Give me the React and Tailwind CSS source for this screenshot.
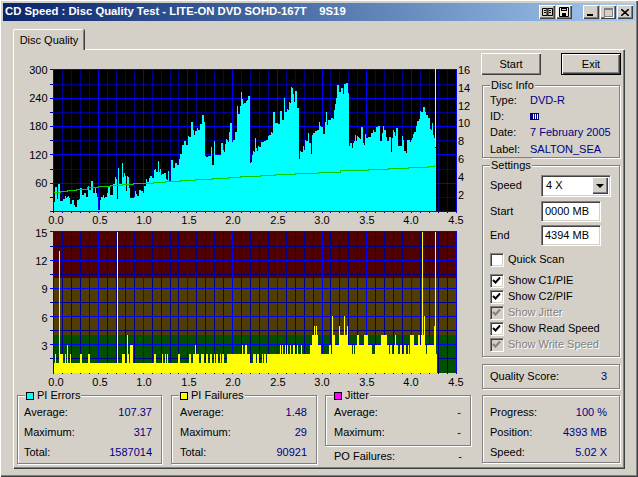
import React from "react";

const FACE = "bg-[#d4d0c8]";
const RAISED = "shadow-[inset_1px_1px_0_#fff,inset_-1px_-1px_0_#404040,inset_-2px_-2px_0_#808080]";
const SUNKEN = "shadow-[inset_1px_1px_0_#808080,inset_2px_2px_0_#404040,inset_-1px_-1px_0_#d4d0c8,1px_1px_0_#fff]";

const X0 = 53.3;
const XEND = 456;
const PER_UNIT = 89.4;
const DATA_END = 436;

// outline of the PI errors graph, read off the reference in page pixels
const piOutline = [
  [53, 199], [63, 196], [68, 193], [70, 200], [75, 202], [83, 194], [93, 189], [95, 184], [97, 198],
  [107, 193], [117, 189], [120, 183], [125, 172], [128, 178], [130, 194], [142, 189], [150, 176],
  [157, 167], [167, 175], [170, 166], [177, 162], [183, 143], [190, 134], [197, 127], [202, 116],
  [204, 117], [205, 153], [213, 157], [223, 141], [233, 138], [237, 113], [242, 100], [248, 96],
  [249, 163], [253, 150], [267, 137], [273, 130], [275, 121], [283, 114], [293, 95], [297, 104],
  [299, 152], [307, 141], [317, 128], [333, 118], [337, 90], [347, 82], [348, 100], [349, 147],
  [357, 136], [363, 143], [372, 128], [383, 124], [387, 141], [393, 131], [403, 153], [413, 134],
  [422, 105], [427, 114], [430, 124], [435, 143],
];

const speedLine = [
  [54, 192], [60, 191], [67, 190], [76, 189], [87, 187], [98, 186], [110, 185], [122, 184], [133, 183],
  [153, 182], [165, 181], [180, 180], [195, 179], [212, 178], [228, 177], [240, 176], [260, 175],
  [275, 174], [295, 173], [318, 172], [340, 170], [368, 169], [388, 168], [408, 167], [428, 166], [434, 165],
];

// [from, to, level] in page pixels for the PI failures bars
const piFailBars = [
  [55, 56, 2], [59, 63, 2], [65, 66, 2], [67, 68, 3], [70, 71, 2], [80, 82, 2], [88, 90, 2], [122, 125, 2],
  [127, 129, 2], [127, 128, 4], [130, 133, 3], [154, 156, 2], [162, 163, 2], [165, 166, 2], [167, 168, 2],
  [178, 180, 2], [189, 191, 2], [193, 199, 2], [195, 196, 3], [201, 204, 2], [206, 208, 2], [210, 212, 2],
  [214, 215, 2], [216, 218, 2], [220, 221, 2], [222, 224, 2], [227, 250, 2], [242, 243, 3], [245, 247, 3],
  [253, 256, 2], [257, 259, 2], [262, 263, 2], [264, 266, 2], [267, 437, 2],
  [242, 243, 3], [245, 246, 3], [280, 281, 3], [282, 283, 3], [285, 286, 3], [287, 288, 3], [290, 291, 3],
  [293, 295, 3], [297, 298, 3], [301, 302, 3], [310, 321, 3], [312, 318, 4], [314, 315, 5], [316, 317, 5],
  [329, 331, 3], [332, 333, 6], [333, 335, 4], [333, 339, 3], [339, 340, 5], [339, 348, 4], [344, 345, 6],
  [347, 348, 5], [348, 352, 3], [353, 354, 3], [355, 363, 3], [357, 359, 4], [363, 372, 3], [364, 368, 4],
  [375, 389, 3], [381, 387, 4], [390, 392, 3], [394, 398, 3], [395, 396, 4], [400, 402, 3], [404, 406, 3],
  [408, 409, 3], [410, 426, 3], [410, 414, 4], [418, 420, 4], [421, 425, 4], [424, 425, 6], [427, 434, 3],
  [434, 436, 5],
];

function rng(seed) {
  let s = seed;
  return () => {
    s = (s * 16807) % 2147483647;
    return s / 2147483647;
  };
}

function outlineAt(x) {
  for (let i = 1; i < piOutline.length; i++) {
    const [x1, y1] = piOutline[i];
    const [x0, y0] = piOutline[i - 1];
    if (x <= x1) return y0 + ((y1 - y0) * (x - x0)) / Math.max(x1 - x0, 1);
  }
  return 143;
}

function piBars() {
  const r = rng(4711);
  const bars = [];
  let x = 54;
  while (x < DATA_END) {
    const w = r() < 0.6 ? 1 : 2;
    const n = r();
    let y = outlineAt(x) + 2 + (r() - 0.5) * 7;
    if (n < 0.07) y += 5 + r() * 9;
    else if (n > 0.82) y -= 5 + r() * 13;
    bars.push([x, Math.max(y, 70), w]);
    x += w;
  }
  return bars;
}

function Grid({ top, bottom, hMajor, hMinor }) {
  const vs = [];
  for (let i = 0; i <= 45; i++) vs.push(i);
  return (
    <g shapeRendering="crispEdges">
      {hMinor.map((y) => (
        <line key={y} x1="50" x2={XEND} y1={y} y2={y} stroke="#000090" />
      ))}
      {vs.map((i) => {
        const x = Math.round(X0 + i * (PER_UNIT / 10)) + 0.5;
        return (
          <line
            key={i}
            x1={x}
            x2={x}
            y1={top}
            y2={bottom + 2}
            stroke={i % 5 === 0 ? "#0000ff" : "#000090"}
          />
        );
      })}
      {hMajor.map((y) => (
        <line key={y} x1="50" x2={XEND} y1={y} y2={y} stroke="#0000ff" />
      ))}
    </g>
  );
}

const xLabels = [
  ["0.0", 56], ["0.5", 100], ["1.0", 144], ["1.5", 189], ["2.0", 233],
  ["2.5", 278], ["3.0", 322], ["3.5", 367], ["4.0", 411], ["4.5", 456],
];

function XAxis({ y }) {
  return xLabels.map(([t, x]) => (
    <text key={t} x={x} y={y} textAnchor="middle" fontSize="11" fill="#000">
      {t}
    </text>
  ));
}

function ErrorsChart() {
  const lefts = [300, 240, 180, 120, 60];
  const rights = [16, 14, 12, 10, 8, 6, 4, 2];
  const major = [69.5, 98.5, 126.5, 154.5, 183.5, 211.5];
  const minor = [84.5, 112.5, 140.5, 169.5, 197.5];
  return (
    <svg viewBox="20 60 460 166" width="460" height="166" className="ml-[6px] block shrink-0">
      <rect x="53" y="69" width="403" height="142" fill="#000" />
      <Grid top={69} bottom={211} hMajor={major} hMinor={minor} />
      <g shapeRendering="crispEdges" fill="#00ffff">
        {piBars().map(([x, y, w]) => (
          <rect key={x} x={x} y={y} width={w} height={211 - y} />
        ))}
      </g>
      <line x1="435.5" x2="435.5" y1="69" y2="147" stroke="#e8e8e8" shapeRendering="crispEdges" />
      <polyline
        points={speedLine.map(([x, y], i) => (i ? `${x},${speedLine[i - 1][1]} ${x},${y}` : `${x},${y}`)).join(" ")}
        fill="none"
        stroke="#00d000"
        strokeWidth="1"
        shapeRendering="crispEdges"
      />
      {lefts.map((v, i) => (
        <text key={v} x="47.500" y={74 + i * 28.2} textAnchor="end" fontSize="11" fill="#000">
          {v}
        </text>
      ))}
      {rights.map((v, i) => (
        <text key={v} x="458" y={74 + i * 17.8} fontSize="11" fill="#000">
          {v}
        </text>
      ))}
      <XAxis y={224} />
    </svg>
  );
}

function FailuresChart() {
  const levels = {};
  for (let x = 54; x < DATA_END; x++) levels[x] = 1;
  piFailBars.forEach(([a, b, l]) => {
    for (let x = a; x < b; x++) levels[x] = Math.max(levels[x] || 0, l);
  });
  const base = 372.7;
  const unit = 9.4;
  const major = [231.5, 260.5, 288.5, 316.5, 344.5];
  const minor = [246.5, 274.5, 302.5, 330.5, 358.5];
  return (
    <svg viewBox="20 226 460 168" width="460" height="168" className="ml-[6px] block shrink-0">
      <g shapeRendering="crispEdges">
        <rect x="53" y="231" width="403" height="47" fill="#500000" />
        <rect x="53" y="278" width="403" height="57" fill="#503c05" />
        <rect x="53" y="335" width="403" height="38" fill="#005000" />
      </g>
      <Grid top={231} bottom={372} hMajor={major} hMinor={minor} />
      <g shapeRendering="crispEdges" fill="#ffff00">
        {Object.keys(levels).map((k) => (
          <rect key={k} x={k} y={base - levels[k] * unit} width="1" height={levels[k] * unit} />
        ))}
        <rect x="59" y={base - 13 * unit} width="1" height={13 * unit} />
        <rect x="422" y="232" width="1" height="140" />
        <rect x="117" y="232" width="1" height="132" fill="#f4f4e0" />
        <rect x="435" y="232" width="1" height="97" fill="#e8e8e8" />
      </g>
      {[15, 12, 9, 6, 3].map((v, i) => (
        <text key={v} x="47.500" y={237 + i * 28.2} textAnchor="end" fontSize="11" fill="#000">
          {v}
        </text>
      ))}
      <XAxis y={386} />
    </svg>
  );
}

function GroupBox({ title, swatch, className, children }) {
  return (
    <div
      className={`relative border border-[#808080] shadow-[inset_1px_1px_0_#fff,1px_1px_0_#fff] ${className}`}
    >
      {title && (
        <div className={`absolute top-[-8px] left-[7px] flex items-center gap-[3px] px-[1px] h-[15px] ${FACE}`}>
          {swatch && <span className={`w-[8px] h-[8px] border border-black ${swatch}`} />}
          <span>{title}</span>
        </div>
      )}
      {children}
    </div>
  );
}

function StatRow({ label, value, className = "h-[20px]" }) {
  return (
    <div className={`flex items-center justify-between ${className}`}>
      <span>{label}</span>
      <span className="text-[#000080]">{value}</span>
    </div>
  );
}

function InfoRow({ label, children }) {
  return (
    <div className="flex items-center h-[16.3px]">
      <span className="w-[40px] shrink-0">{label}</span>
      <span className="text-[#000080] whitespace-nowrap">{children}</span>
    </div>
  );
}

function Check({ label, checked, disabled }) {
  return (
    <div className="flex items-center h-[16px]">
      <span
        className={`w-[13px] h-[13px] mr-[5px] flex items-center justify-center ${SUNKEN} ${
          disabled ? "bg-[#d4d0c8]" : "bg-white"
        }`}
      >
        {checked && (
          <svg viewBox="0 0 9 9" width="9" height="9">
            <path d="M1 4 L3.5 6.5 L8 1.5" fill="none" stroke={disabled ? "#808080" : "#000"} strokeWidth="1.9" />
          </svg>
        )}
      </span>
      <span className={disabled ? "text-[#808080] [text-shadow:1px_1px_0_#fff]" : ""}>{label}</span>
    </div>
  );
}

function CapButton({ children, className = "" }) {
  return (
    <div className={`w-[16px] h-[14px] flex items-center justify-center ${FACE} ${RAISED} ${className}`}>
      {children}
    </div>
  );
}

function TitleBar() {
  return (
    <div className="h-[18px] flex items-center justify-between pl-[2px] pr-[2px] bg-gradient-to-r from-[#0a246a] to-[#a6caf0]">
      <span className="font-bold text-white whitespace-pre text-[11.3px]">
        CD Speed : Disc Quality Test - LITE-ON DVD SOHD-167T{"    "}9S19
      </span>
      <div className="flex items-center">
        <CapButton className="w-[15px] mr-[1px]">
          <svg viewBox="0 0 11 9" width="11" height="9">
            <path d="M.5.5h4.5v7h-4.5zM6 .5h4.5v7H6zM5 1h1M5 7h1M2 2.500h2M2 4.500h2M7 2.500h2M7 4.500h2" fill="none" stroke="#000" />
          </svg>
        </CapButton>
        <CapButton className="w-[15px] bg-[#eeeae2] shadow-[inset_1px_1px_0_#404040,inset_-1px_-1px_0_#fff]">
          <svg viewBox="0 0 10 10" width="10" height="10">
            <path d="M.5.5h9v9h-9z" fill="none" stroke="#000" />
            <path d="M2 1h6v3H2zM3 6h4v3H3z" fill="#000" />
            <path d="M3 2h4v1H3z" fill="#d4d0c8" />
          </svg>
        </CapButton>
        <CapButton className="ml-[11px]">
          <span className="w-[6px] h-[2px] bg-black mt-[6px] mr-[2px]" />
        </CapButton>
        <CapButton className="ml-[1px]">
          <span className="w-[9px] h-[9px] border border-[#808080] border-t-2 shadow-[1px_1px_0_#fff]" />
        </CapButton>
        <CapButton className="ml-[1px]">
          <svg viewBox="0 0 8 7" width="8" height="7">
            <path d="M0 0 L8 7 M8 0 L0 7" stroke="#000" strokeWidth="1.6" />
          </svg>
        </CapButton>
      </div>
    </div>
  );
}

function LeftColumn() {
  return (
    <div className="w-[466px] pt-[10px] flex flex-col">
      <ErrorsChart />
      <FailuresChart />
      <div className="flex items-start pl-[3px] mt-[1px]">
        <GroupBox title="PI Errors" swatch="bg-[#00ffff]" className="w-[145px] h-[69px] pt-[6px] pl-[6px] pr-[9px]">
          <StatRow label="Average:" value="107.37" />
          <StatRow label="Maximum:" value="317" />
          <StatRow label="Total:" value="1587014" />
        </GroupBox>
        <GroupBox title="PI Failures" swatch="bg-[#ffff00]" className="ml-[9px] w-[146px] h-[69px] pt-[6px] pl-[8px] pr-[9px]">
          <StatRow label="Average:" value="1.48" />
          <StatRow label="Maximum:" value="29" />
          <StatRow label="Total:" value="90921" />
        </GroupBox>
        <div className="ml-[8px] w-[146px]">
          <GroupBox title="Jitter" swatch="bg-[#ff00ff]" className="h-[51px] pt-[6px] pl-[8px] pr-[9px]">
            <StatRow label="Average:" value="-" />
            <StatRow label="Maximum:" value="-" />
          </GroupBox>
          <div className="pl-[9px] pr-[9px]">
            <StatRow label="PO Failures:" value="-" />
          </div>
        </div>
      </div>
    </div>
  );
}

function RightColumn() {
  return (
    <div className="ml-[1px] w-[141px] pt-[3px] flex flex-col">
      <div className="flex gap-[20px]">
        <button className={`w-[60px] h-[22px] ${FACE} ${RAISED}`}>Start</button>
        <button className={`w-[60px] h-[22px] border border-black ${FACE} ${RAISED}`}>Exit</button>
      </div>

      <GroupBox title="Disc Info" className="ml-[1px] mt-[10px] w-[138px] h-[73px] pt-[6px] pl-[7px]">
        <InfoRow label="Type:">DVD-R</InfoRow>
        <InfoRow label="ID:">
          <span className="flex w-[9px] h-[7px] border border-[#000080] gap-[1px] bg-white">
            <span className="w-[2px] bg-[#000080]" />
            <span className="w-[1px] bg-[#000080]" />
            <span className="w-[1px] bg-[#000080]" />
          </span>
        </InfoRow>
        <InfoRow label="Date:">7 February 2005</InfoRow>
        <InfoRow label="Label:">SALTON_SEA</InfoRow>
      </GroupBox>

      <GroupBox title="Settings" className="ml-[1px] mt-[7px] w-[138px] h-[192px] pt-[9px] pl-[7px]">
        <div className="flex items-center h-[21px]">
          <span className="w-[51px]">Speed</span>
          <div className={`w-[69px] h-[21px] bg-white flex items-center justify-between pl-[5px] pr-[2px] ${SUNKEN}`}>
            <span>4 X</span>
            <span className={`w-[16px] h-[17px] flex items-center justify-center ${FACE} ${RAISED}`}>
              <span className="w-0 h-0 border-x-[4px] border-x-transparent border-t-[4px] border-t-black" />
            </span>
          </div>
        </div>
        <div className="flex items-center h-[20px] mt-[5px]">
          <span className="w-[51px]">Start</span>
          <div className={`w-[59px] h-[20px] bg-white flex items-center pl-[4px] ${SUNKEN}`}>0000 MB</div>
        </div>
        <div className="flex items-center h-[20px] mt-[4px]">
          <span className="w-[51px]">End</span>
          <div className={`w-[59px] h-[20px] bg-white flex items-center pl-[4px] ${SUNKEN}`}>4394 MB</div>
        </div>
        <div className="mt-[6px]">
          <Check label="Quick Scan" />
        </div>
        <div className="mt-[5px]">
          <Check label="Show C1/PIE" checked />
          <Check label="Show C2/PIF" checked />
          <Check label="Show Jitter" checked disabled />
          <Check label="Show Read Speed" checked />
          <Check label="Show Write Speed" checked disabled />
        </div>
      </GroupBox>

      <GroupBox className="ml-[1px] mt-[7px] w-[138px] h-[25px] pl-[7px] pr-[12px] flex items-center">
        <StatRow label="Quality Score:" value="3" className="w-full" />
      </GroupBox>

      <GroupBox className="ml-[1px] mt-[6px] w-[138px] h-[68px] pt-[6px] pl-[7px] pr-[12px]">
        <StatRow label="Progress:" value="100 %" />
        <StatRow label="Position:" value="4393 MB" />
        <StatRow label="Speed:" value="5.02 X" />
      </GroupBox>
    </div>
  );
}

export default function App() {
  return (
    <div
      className={`w-[638px] h-[477px] p-[3px] overflow-hidden text-[11px] leading-none text-black [font-family:Liberation_Sans,sans-serif] ${FACE} shadow-[inset_1px_1px_0_#fff,inset_-1px_-1px_0_#404040,inset_-2px_-2px_0_#808080]`}
    >
      <TitleBar />
      <div className="pl-[10px] pt-[8px]">
        {/* TAB */}
        <div className={`relative z-10 w-[71px] h-[21px] -mb-[1px] flex items-center justify-center border-l border-t border-white rounded-t-[2px] shadow-[inset_-1px_0_0_#808080,1px_0_0_#404040] ${FACE}`}>
          Disc Quality
        </div>
        {/* PANE */}
        <div className="w-[611px] h-[419px] flex border-t border-l border-white shadow-[inset_-1px_-1px_0_#808080,1px_1px_0_#404040]">
          <LeftColumn />
          <RightColumn />
        </div>
      </div>
    </div>
  );
}
